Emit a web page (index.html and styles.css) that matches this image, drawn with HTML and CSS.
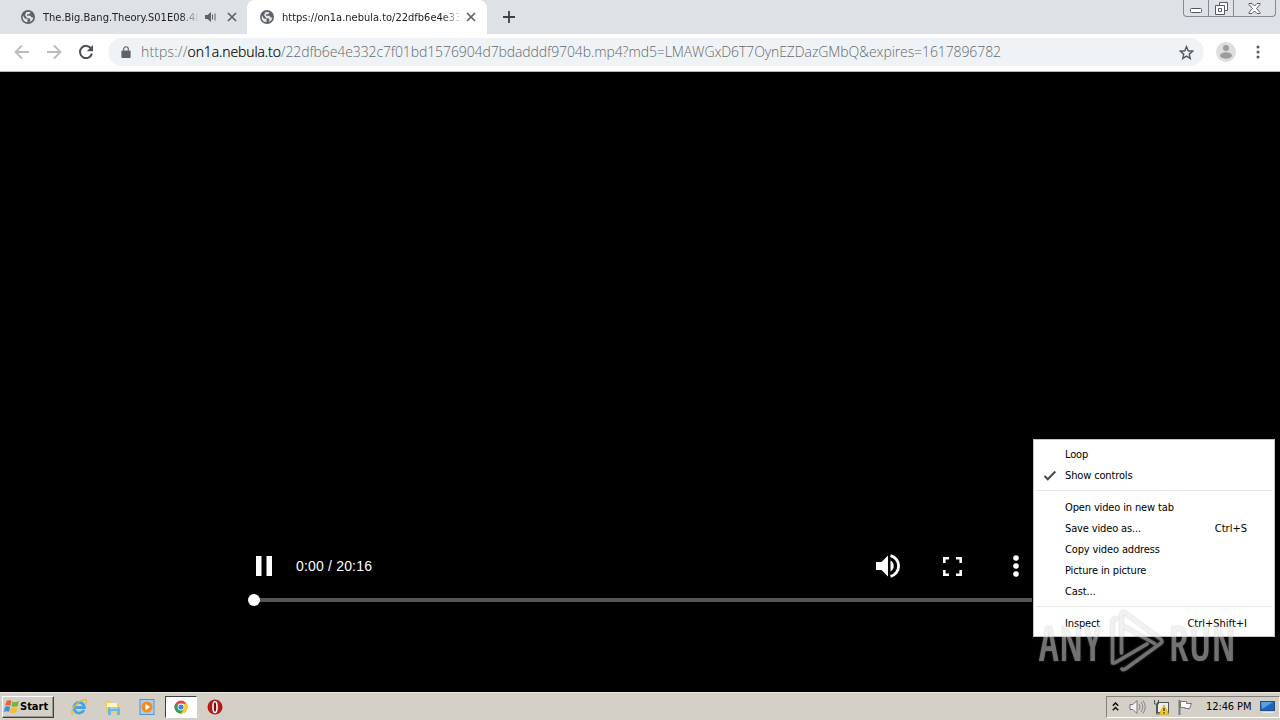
FILE: index.html
```html
<!DOCTYPE html>
<html lang="en">
<head>
    <meta charset="UTF-8">
    <title>on1a.nebula.to</title>
    <link rel="stylesheet" href="styles.css">
</head>
<body>
    <svg class="defs" width="0" height="0">
        <symbol id="globe" viewBox="0 0 14 14">
            <circle cx="7" cy="7" r="7" fill="#5f6368"/>
            <path d="M2 5.500l2 3.200h2.500v3.500C3.300 12 1.500 9.500 1.700 7zM5.500 2h4L8.200 4.200H6v1.600h3.500l1 1.700h1.800A5.300 5.300 0 0 1 8.500 12l1-2-1-1.800H6.200L4 5z" fill="#e4e7eb"/>
        </symbol>
        <symbol id="cross" viewBox="0 0 10 10">
            <path d="M1 1l8 8M9 1L1 9" stroke="#5f6368" stroke-width="1.700"/>
        </symbol>
    </svg>

    <header class="tabstrip">
        <div class="tab">
            <svg class="favicon"><use href="#globe"/></svg>
            <span class="tab-title tab-title-short">The.Big.Bang.Theory.S01E08.48</span>
            <svg class="speaker" viewBox="0 0 12 10"><path d="M0 3h2.500L6 0v10L2.500 7H0z" fill="#5f6368"/><path d="M7.500 2.500v5M10 1.500v7" stroke="#5f6368" fill="none"/></svg>
            <svg class="tab-close"><use href="#cross"/></svg>
        </div>
        <div class="tab active">
            <svg class="favicon"><use href="#globe"/></svg>
            <span class="tab-title">https://on1a.nebula.to/22dfb6e4e33</span>
            <svg class="tab-close"><use href="#cross"/></svg>
        </div>
        <svg class="new-tab" viewBox="0 0 12 12"><path d="M6 0v12M0 6h12" stroke="#3c4043" stroke-width="1.800"/></svg>
        <div class="window-buttons">
            <span class="win-min"><svg width="13" height="5"><rect x=".5" y=".5" width="11" height="4" rx="1" fill="#fff" stroke="#54585f"/></svg></span>
            <span class="win-max"><svg width="13" height="13"><path d="M4.500.5h8v8h-3v4h-9v-9h4z" fill="#fff" stroke="#54585f"/><path d="M4.500 3.500h5v5M3.500 6.500h3v3h-3z" fill="none" stroke="#54585f"/></svg></span>
            <span class="win-close"><svg width="13" height="11"><path d="M1 .5h3l2.500 2.500L9 .5h3v1L8.500 5.500 12 9.500v1H9L6.500 8 4 10.500H1v-1l3.500-4L1 1.500z" fill="#fff" stroke="#54585f"/></svg></span>
        </div>
    </header>

    <nav class="toolbar">
        <svg class="nav-icon" viewBox="0 0 16 16"><path d="M15 8H2M8 1.500L1.500 8 8 14.500" fill="none" stroke="#b9bbbe" stroke-width="1.800"/></svg>
        <svg class="nav-icon" viewBox="0 0 16 16"><path d="M1 8h13M8 1.500L14.500 8 8 14.500" fill="none" stroke="#b9bbbe" stroke-width="1.800"/></svg>
        <svg class="nav-icon" viewBox="0 0 16 16"><path d="M13.300 4.800A6.100 6.100 0 1 0 14 9.500" fill="none" stroke="#4c5054" stroke-width="2"/><path d="M15 1v6.200H8.800z" fill="#4c5054"/></svg>
        <div class="omnibox">
            <svg class="lock" viewBox="0 0 10 13"><path d="M1 5h8q1 0 1 1v6q0 1-1 1H1q-1 0-1-1V6q0-1 1-1z" fill="#5f6368"/><path d="M2.500 5V3.300a2.500 2.500 0 0 1 5 0V5" fill="none" stroke="#5f6368" stroke-width="1.300"/></svg>
            <span class="url"><span class="scheme">https://</span><span class="host">on1a.nebula.to</span><span class="path">/22dfb6e4e332c7f01bd1576904d7bdadddf9704b.mp4?md5=LMAWGxD6T7OynEZDazGMbQ&amp;expires=1617896782</span></span>
            <svg class="star" viewBox="0 0 16 16"><path d="M8 1.800l1.800 4.400 4.700.4-3.600 3.100 1.100 4.600L8 11.800l-4 2.500 1.100-4.600L1.500 6.600l4.700-.4z" fill="none" stroke="#54585c" stroke-width="1.500"/></svg>
        </div>
        <svg class="avatar" viewBox="0 0 20 20"><circle cx="10" cy="10" r="10" fill="#dedede"/><circle cx="10" cy="6" r="3" fill="#9d9d9d"/><ellipse cx="10" cy="13.500" rx="6" ry="3.300" fill="#9d9d9d"/></svg>
        <svg class="menu-dots" viewBox="0 0 4 14"><circle cx="2" cy="2" r="1.500"/><circle cx="2" cy="7" r="1.500"/><circle cx="2" cy="12" r="1.500"/></svg>
    </nav>

    <main class="player">
        <div class="controls">
            <svg class="pause" viewBox="0 0 16 20"><path d="M0 0h5.500v20H0zM10.500 0H16v20h-5.500z" fill="#fff"/></svg>
            <span class="time">0:00 / 20:16</span>
            <svg class="volume" viewBox="0 0 25 24"><path d="M0 8h5.500L12 1.500v21L5.500 16H0zM14.500 6.500a6.300 6.300 0 0 1 0 11z" fill="#fff"/><path d="M14.500 1.700a10.600 10.600 0 0 1 0 20.600" fill="none" stroke="#fff" stroke-width="2.800"/></svg>
            <svg class="fullscreen" viewBox="0 0 19 19"><path d="M1.300 6V1.300H6M13 1.300h4.700V6M17.700 13v4.700H13M6 17.700H1.300V13" fill="none" stroke="#fff" stroke-width="2.600"/></svg>
            <svg class="more" viewBox="0 0 6 22"><circle cx="3" cy="3" r="2.800"/><circle cx="3" cy="11" r="2.800"/><circle cx="3" cy="19" r="2.800"/></svg>
        </div>
        <div class="timeline"><span class="thumb"></span></div>
    </main>

    <footer class="taskbar">
        <div class="start">
            <svg viewBox="0 0 16 15"><path d="M2.500 2Q5 .5 7.500 2L6.500 6.800Q4 5.500 1.200 6.800z" fill="#e8642c"/><path d="M8.500 2.500Q11.500 4 15 2l-1.300 5Q11 8.500 7.500 7.200z" fill="#78b43c"/><path d="M1 8q2.700-1.400 5.200 0L5 12.800Q2.500 11.500 0 12.800z" fill="#3b8ed8"/><path d="M7.200 8.300Q10.500 9.800 13.500 8l-1.300 5Q9 14.800 6 13.300z" fill="#f6bd25"/></svg>
            <span>Start</span>
        </div>
        <div class="quick">
            <svg viewBox="0 0 18 18"><path d="M14 12A5.300 5.300 0 1 1 14.500 9.500H5" fill="none" stroke="#45a5e4" stroke-width="2.800"/><path d="M3 16.500C-1 14.500 6 4 13.500 1.800c4-1 3.500 2.500 2 4.700" fill="none" stroke="#e5b73c" stroke-width="1.300"/></svg>
        </div>
        <div class="quick">
            <svg viewBox="0 0 18 18"><path d="M2 3h5l1 2h7v10H2z" fill="#eccd69"/><path d="M3 5h10v4H3z" fill="#fff5b8"/><path d="M4 17v-6q0-2 2-2h8q2 0 2 2v6h-3v-4H7v4z" fill="#6db6dc"/><path d="M6 10h8" stroke="#c6e9f7"/></svg>
        </div>
        <div class="quick">
            <svg viewBox="0 0 18 18"><rect x="2" y="1.500" width="14" height="15" fill="#a9cdeb" stroke="#5295c8"/><circle cx="9" cy="9" r="5.500" fill="#f38b1c"/><path d="M7.500 5.800l4.500 3.200-4.500 3.200z" fill="#fff"/></svg>
        </div>
        <div class="quick pressed">
            <svg viewBox="0 0 18 18"><circle cx="9" cy="9" r="6.500" fill="#e04a3a"/><path d="M9 9L3.400 5.700A6.500 6.500 0 0 0 9 15.500l3-5z" fill="#32a350"/><path d="M9 15.500a6.500 6.500 0 0 0 5.700-9.700H9L12 11z" fill="#fbc821"/><circle cx="9" cy="9" r="3.400" fill="#fff"/><circle cx="9" cy="9" r="2.600" fill="#3f83ea"/></svg>
        </div>
        <div class="quick">
            <svg viewBox="0 0 18 18"><circle cx="9" cy="9" r="7.500" fill="#b5191b"/><ellipse cx="9" cy="9" rx="2" ry="5.500" fill="#741012" stroke="#fff" stroke-width="1.600"/></svg>
        </div>
        <div class="tray">
            <svg class="chevrons" viewBox="0 0 7 9"><path d="M.8 3.800L3.500 1l2.700 2.800M.8 8.300l2.700-2.800 2.700 2.800" fill="none" stroke="#111" stroke-width="1.500"/></svg>
            <svg class="tray-sound" viewBox="0 0 17 16"><path d="M1 5.500h3L8 1.500v13l-4-4H1z" fill="#f6f6f6" stroke="#777"/><path d="M10 5q2 3 0 6M12 3q3.500 5 0 10M14 1.500q4.500 6.500 0 13" fill="none" stroke="#858585"/></svg>
            <svg class="tray-net" viewBox="0 0 17 16"><rect x="4.500" y="3.500" width="11" height="10" fill="#ececec" stroke="#555"/><path d="M1.500 1v4h4V1M3.500 5v10h4" fill="none" stroke="#555"/><path d="M11 6l5 9.500H6z" fill="#f6cf17" stroke="#bd8e00" stroke-width=".5"/><path d="M11 9v3M11 13v1.500" stroke="#222" stroke-width="1.200"/></svg>
            <svg class="tray-flag" viewBox="0 0 16 16"><path d="M2.500 1v15" stroke="#777" stroke-width="2"/><path d="M3.500 2.500h6v2h5l-2 5H8v-1H3.500z" fill="#fafafa" stroke="#777"/></svg>
            <span class="clock">12:46 PM</span>
            <svg class="desktop" viewBox="0 0 15 14"><rect x=".5" y="1.500" width="14" height="9" fill="#1b65ba" stroke="#254d83"/><path d="M1 2h12L2 9z" fill="#56a1e1"/><path d="M3 12.500h10" stroke="#e9edf2"/></svg>
        </div>
    </footer>

    <div class="context-menu">
        <div class="item">Loop</div>
        <div class="item checked"><svg viewBox="0 0 14 11"><path d="M1.500 6l3.300 3.300L12.300 1.500" fill="none" stroke="#4a4a4a" stroke-width="2"/></svg>Show controls</div>
        <div class="separator"></div>
        <div class="item">Open video in new tab</div>
        <div class="item">Save video as...<span>Ctrl+S</span></div>
        <div class="item">Copy video address</div>
        <div class="item">Picture in picture</div>
        <div class="item">Cast...</div>
        <div class="separator"></div>
        <div class="item">Inspect<span>Ctrl+Shift+I</span></div>
    </div>

    <div class="watermark">
        <span class="mark-any">ANY</span>
        <svg viewBox="0 0 56 62"><path d="M12.500 43V5q0-4 3-2.500L51.500 29q3 2.500 0 4.500L17 58.500q-3 2-4 .5M12.500 15l33 18.500M3.500 53V11q0-2.500 4-2.500M3.500 50q0 4 3 2.500L38 34" fill="none" stroke="#e4e4e4" stroke-width="3.500" stroke-linecap="round"/></svg>
        <span class="mark-run">RUN</span>
    </div>
</body>
</html>
```
FILE: styles.css
```css
* {
    box-sizing: border-box;
}

body {
    margin: 0;
    width: 1280px;
    height: 720px;
    display: flex;
    flex-direction: column;
    overflow: hidden;
    position: relative;
    background: #000;
    font-family: "DejaVu Sans Condensed", "DejaVu Sans", sans-serif;
    font-stretch: condensed;
    font-size: 11px;
}

svg {
    display: block;
    flex: none;
}

.defs {
    position: absolute;
}

/* Tabs */
.tabstrip {
    height: 34px;
    flex: none;
    display: flex;
    background: #dee1e6;
}

.tab {
    width: 247px;
    height: 34px;
    display: flex;
    align-items: center;
    padding: 0 10px 0 21px;
}

.tab.active {
    width: 240px;
    background: #fff;
    border-radius: 8px 8px 0 0;
    padding: 0 11px 0 13px;
}

.favicon {
    width: 14px;
    height: 14px;
}

.tab-title {
    width: 177px;
    margin-left: 8px;
    color: #202226;
    white-space: nowrap;
    overflow: hidden;
    -webkit-mask-image: linear-gradient(90deg, #000 160px, transparent 180px);
}

.tab-title-short {
    width: 155px;
    -webkit-mask-image: linear-gradient(90deg, #000 138px, transparent 156px);
}

.speaker {
    width: 12px;
    height: 10px;
    margin-left: 7px;
}

.tab-close {
    width: 10px;
    height: 10px;
    margin-left: auto;
}

.new-tab {
    width: 12px;
    height: 12px;
    margin: 11px 0 0 16px;
}

.window-buttons {
    display: flex;
    width: 93px;
    height: 17px;
    margin: 0 4px 0 auto;
    border: 1px solid #858991;
    border-top: 0;
    border-radius: 0 0 4px 4px;
}

.window-buttons span {
    display: flex;
    justify-content: center;
    align-items: center;
    border-right: 1px solid #858991;
}

.window-buttons .win-min {
    width: 25px;
    padding-top: 5px;
}

.window-buttons .win-max {
    width: 25px;
}

.window-buttons .win-close {
    flex: 1;
    border: 0;
}

/* Address bar */
.toolbar {
    height: 38px;
    flex: none;
    display: flex;
    align-items: center;
    padding: 0 20px 1px 14px;
    background: #fff;
    border-bottom: 1px solid #b6b6b6;
}

.nav-icon {
    width: 16px;
    height: 16px;
    margin-right: 16px;
}

.omnibox {
    width: 1096px;
    height: 28px;
    margin-left: -2px;
    display: flex;
    align-items: center;
    padding: 0 10px 0 13px;
    border-radius: 14px;
    background: #f0f3f5;
}

.lock {
    width: 10px;
    height: 12px;
}

.url {
    margin: -2px 0 0 10px;
    font-family: "Open Sans", sans-serif;
    font-size: 14px;
    font-weight: 300;
    font-stretch: normal;
    white-space: nowrap;
    color: #64686c;
}

.url .scheme {
    letter-spacing: 0.15px;
}

.url .host {
    color: #000;
    letter-spacing: -0.1px;
    -webkit-text-stroke: 0.2px #000;
}

.url .path {
    letter-spacing: -0.1px;
}

.star {
    width: 15px;
    height: 15px;
    margin-left: auto;
}

.avatar {
    width: 20px;
    height: 20px;
    margin-left: 12px;
}

.menu-dots {
    width: 4px;
    height: 14px;
    margin-left: auto;
    fill: #54585c;
}

/* Video */
.player {
    flex: 1;
    padding: 481px 248px 0 254px;
    background: #000;
}

.controls {
    height: 26px;
    display: flex;
    align-items: center;
}

.pause {
    width: 16px;
    height: 20px;
    margin-left: 2px;
}

.time {
    margin-left: 24px;
    color: #fff;
    font-family: "Liberation Sans", sans-serif;
    font-size: 14px;
    letter-spacing: 0.18px;
}

.volume {
    width: 25px;
    height: 24px;
    margin-left: auto;
}

.fullscreen {
    width: 19px;
    height: 19px;
    margin-left: 42px;
}

.more {
    width: 6px;
    height: 22px;
    margin: 0 13px 0 51px;
    fill: #fff;
}

.timeline {
    height: 4px;
    margin-top: 19px;
    display: flex;
    align-items: center;
    background: #555;
}

.thumb {
    width: 12px;
    height: 12px;
    margin-left: -6px;
    border-radius: 50%;
    background: #fff;
}

/* Taskbar */
.taskbar {
    height: 28px;
    flex: none;
    display: flex;
    align-items: center;
    padding: 0 0 0 2px;
    background: #d4d0c8;
    border-top: 1px solid #e8e6e1;
}

.start {
    width: 52px;
    height: 22px;
    margin-right: 9px;
    display: flex;
    align-items: center;
    border: 1px solid;
    border-color: #fff #404040 #404040 #fff;
    box-shadow: inset -1px -1px #9b9892;
    padding-left: 1px;
    font-weight: bold;
}

.start svg {
    width: 16px;
    height: 15px;
}

.quick {
    width: 32px;
    height: 22px;
    margin-right: 2px;
    display: flex;
    align-items: center;
    justify-content: center;
}

.quick svg {
    width: 18px;
    height: 18px;
}

.quick.pressed {
    background: #fff;
    border: 1px solid;
    border-color: #404040 #fff #fff #404040;
}

.tray {
    width: 174px;
    height: 22px;
    margin-left: auto;
    display: flex;
    align-items: center;
    padding-left: 5px;
    border: 1px solid;
    border-color: #85817a #fff #fff #85817a;
}

.chevrons {
    width: 7px;
    height: 9px;
}

.tray-sound {
    width: 17px;
    height: 16px;
    margin-left: 10px;
}

.tray-net {
    width: 17px;
    height: 16px;
    margin-left: 7px;
}

.tray-flag {
    width: 16px;
    height: 16px;
    margin-left: 7px;
}

.clock {
    margin-left: 13px;
    white-space: nowrap;
    letter-spacing: -0.1px;
}

.desktop {
    width: 15px;
    height: 14px;
    margin: 0 4px 0 auto;
}

/* Right click menu over the video */
.context-menu {
    position: absolute;
    left: 1033px;
    top: 439px;
    width: 242px;
    height: 198px;
    padding-top: 4px;
    background: #fff;
    border: 1px solid #c6c6c6;
    color: #000;
    letter-spacing: -0.14px;
}

.item {
    height: 21px;
    display: flex;
    align-items: center;
    padding: 0 27px 0 31px;
}

.item span {
    margin-left: auto;
    letter-spacing: 0;
}

.item.checked {
    padding-left: 9px;
}

.item svg {
    width: 14px;
    height: 11px;
    margin-right: 8px;
}

.separator {
    height: 1px;
    margin: 4px 2px 6px;
    background: #e5e5e5;
}

.watermark {
    position: absolute;
    left: 1038px;
    top: 610px;
    display: flex;
    align-items: center;
    opacity: 0.5;
    color: #e4e4e4;
    font-family: "Open Sans", sans-serif;
    font-stretch: 75%;
    font-size: 49px;
    font-weight: 600;
    letter-spacing: 1px;
    line-height: 62px;
    text-shadow: 0 0 2px #999;
}

.watermark svg {
    width: 56px;
    height: 62px;
    filter: drop-shadow(0 0 1px #999);
}

.watermark span {
    width: 62px;
    margin-left: 4px;
    transform-origin: left center;
    transform: translateY(1px) scaleX(0.82);
}

.watermark .mark-any {
    width: 70px;
    margin-left: 1px;
}
```
